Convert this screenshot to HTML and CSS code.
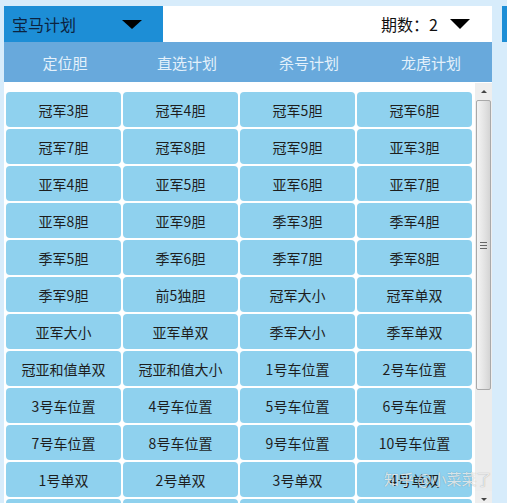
FILE: index.html
```html
<!DOCTYPE html>
<html lang="zh-CN">
<head>
    <meta charset="UTF-8">
    <meta name="viewport" content="width=device-width, initial-scale=1.0">
    <title>宝马计划</title>
    <link rel="stylesheet" href="styles.css">
</head>
<body>
    <div class="page">
        <div class="panel">
            <div class="header">
                <div class="plan-select">
                    <span>宝马计划</span>
                    <i class="caret"></i>
                </div>
                <div class="period">
                    <span>期数：2</span>
                    <i class="caret"></i>
                </div>
            </div>
            <div class="tabs">
                <span>定位胆</span>
                <span>直选计划</span>
                <span>杀号计划</span>
                <span>龙虎计划</span>
            </div>
            <div class="content">
                <div class="plans">
                    <div class="plan">冠军3胆</div>
                    <div class="plan">冠军4胆</div>
                    <div class="plan">冠军5胆</div>
                    <div class="plan">冠军6胆</div>
                    <div class="plan">冠军7胆</div>
                    <div class="plan">冠军8胆</div>
                    <div class="plan">冠军9胆</div>
                    <div class="plan">亚军3胆</div>
                    <div class="plan">亚军4胆</div>
                    <div class="plan">亚军5胆</div>
                    <div class="plan">亚军6胆</div>
                    <div class="plan">亚军7胆</div>
                    <div class="plan">亚军8胆</div>
                    <div class="plan">亚军9胆</div>
                    <div class="plan">季军3胆</div>
                    <div class="plan">季军4胆</div>
                    <div class="plan">季军5胆</div>
                    <div class="plan">季军6胆</div>
                    <div class="plan">季军7胆</div>
                    <div class="plan">季军8胆</div>
                    <div class="plan">季军9胆</div>
                    <div class="plan">前5独胆</div>
                    <div class="plan">冠军大小</div>
                    <div class="plan">冠军单双</div>
                    <div class="plan">亚军大小</div>
                    <div class="plan">亚军单双</div>
                    <div class="plan">季军大小</div>
                    <div class="plan">季军单双</div>
                    <div class="plan">冠亚和值单双</div>
                    <div class="plan">冠亚和值大小</div>
                    <div class="plan">1号车位置</div>
                    <div class="plan">2号车位置</div>
                    <div class="plan">3号车位置</div>
                    <div class="plan">4号车位置</div>
                    <div class="plan">5号车位置</div>
                    <div class="plan">6号车位置</div>
                    <div class="plan">7号车位置</div>
                    <div class="plan">8号车位置</div>
                    <div class="plan">9号车位置</div>
                    <div class="plan">10号车位置</div>
                    <div class="plan">1号单双</div>
                    <div class="plan">2号单双</div>
                    <div class="plan">3号单双</div>
                    <div class="plan">4号单双</div>
                    <!-- next row, scrolled below the fold -->
                    <div class="plan"></div>
                    <div class="plan"></div>
                    <div class="plan"></div>
                    <div class="plan"></div>
                </div>
                <div class="scrollbar">
                    <div class="scroll-btn up"></div>
                    <div class="scroll-thumb"><i></i><i></i><i></i></div>
                    <div class="scroll-track"></div>
                    <div class="scroll-btn down"></div>
                </div>
                <div class="watermark">知乎 @小菜菜了</div>
            </div>
        </div>
        <div class="side"></div>
    </div>
</body>
</html>
```

FILE: styles.css
```css
/* General Styling */
body {
    margin: 0;
    padding: 0;
    font-family: "Noto Sans CJK SC", "Microsoft YaHei", sans-serif;
    background-color: #d7ecfb;
    color: #222;
    height: 503px;
    overflow: hidden;
}

.page {
    display: flex;
    padding: 6px 0 0 4px;
}

.panel {
    width: 489px;
    height: 497px;
    display: flex;
    flex-direction: column;
}

.side {
    width: 6px;
    height: 36px;
    margin-left: 10px;
    background-color: #1d8ed6;
}

/* Header with the two dropdowns */
.header {
    display: flex;
    height: 36px;
    background-color: white;
}

.plan-select {
    display: flex;
    align-items: center;
    justify-content: space-between;
    padding: 0 21px 0 8px;
    box-sizing: border-box;
    width: 159px;
    background-color: #1d8ed6;
    color: #0c2340;
    font-size: 16px;
}

.period {
    flex: 1;
    display: flex;
    align-items: center;
    justify-content: flex-end;
    gap: 12px;
    padding-right: 22px;
    font-size: 16px;
    color: #111;
}

.caret {
    width: 0;
    height: 0;
    border-left: 10px solid transparent;
    border-right: 10px solid transparent;
    border-top: 9px solid #000;
}

.period .caret {
    border-top-width: 10px;
}

/* Tab bar */
.tabs {
    display: grid;
    grid-template-columns: repeat(4, 1fr);
    height: 40px;
    align-items: center;
    text-align: center;
    background-color: #68a9dc;
    color: #e4f1fb;
    font-size: 15px;
}

/* Plan list */
.content {
    position: relative;
    flex: 1;
    display: flex;
    background-color: white;
    overflow: hidden;
}

.plans {
    display: grid;
    grid-template-columns: repeat(4, 115px);
    grid-auto-rows: 35px;
    gap: 2px;
    padding: 10px 0 0 2px;
    align-content: start;
}

.plan {
    display: flex;
    align-items: center;
    justify-content: center;
    background-color: #8fd1ee;
    border-radius: 4px;
    font-size: 14px;
    color: #1e1e1e;
}

.scrollbar {
    width: 17px;
    height: 425px;
    margin: 1px 0 0 3px;
    display: flex;
    flex-direction: column;
    background-color: #eeeeee;
    flex-shrink: 0;
}

.scroll-btn {
    height: 17px;
    display: flex;
    align-items: center;
    justify-content: center;
}

.scroll-btn::after {
    content: "";
    border-left: 3px solid transparent;
    border-right: 3px solid transparent;
}

.scroll-btn.up::after {
    border-bottom: 3px solid #444;
}

.scroll-btn.down::after {
    border-top: 3px solid #444;
}

.scroll-thumb {
    height: 288px;
    margin: 0 1px;
    border: 1px solid #a9a9a9;
    border-radius: 2px;
    background: linear-gradient(90deg, #f4f4f4, #e2e2e2 60%, #d4d4d4);
    display: flex;
    flex-direction: column;
    align-items: center;
    justify-content: center;
    gap: 2px;
}

.scroll-thumb i {
    width: 7px;
    height: 1px;
    background-color: #666;
}

.scroll-track {
    flex: 1;
    background-color: #ececec;
}

.watermark {
    position: absolute;
    left: 380px;
    top: 386px;
    font-size: 15px;
    color: rgba(255, 255, 255, 0.75);
    text-shadow: 0 0 1px rgba(0, 0, 0, 0.35);
    white-space: nowrap;
}
```
